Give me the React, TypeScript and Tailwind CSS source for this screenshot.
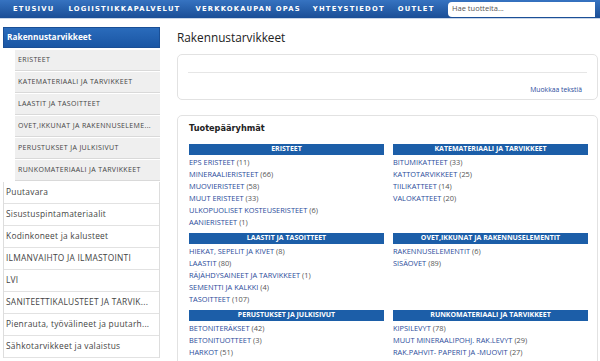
import React from "react";

const navItems = ["ETUSIVU", "LOGIISTIIKKAPALVELUT", "VERKKOKAUPAN OPAS", "YHTEYSTIEDOT", "OUTLET"];

const subItems = [
  "ERISTEET",
  "KATEMATERIAALI JA TARVIKKEET",
  "LAASTIT JA TASOITTEET",
  "OVET,IKKUNAT JA RAKENNUSELEME...",
  "PERUSTUKSET JA JULKISIVUT",
  "RUNKOMATERIAALI JA TARVIKKEET",
];

const mainItems = [
  "Puutavara",
  "Sisustuspintamateriaalit",
  "Kodinkoneet ja kalusteet",
  "ILMANVAIHTO JA ILMASTOINTI",
  "LVI",
  "SANITEETTIKALUSTEET JA TARVIK...",
  "Pienrauta, työvälineet ja puutarh...",
  "Sähkotarvikkeet ja valaistus",
];

type Group = { title: string; items: [string, number][] };

const groups: Group[] = [
  {
    title: "ERISTEET",
    items: [
      ["EPS ERISTEET", 11],
      ["MINERAALIERISTEET", 66],
      ["MUOVIERISTEET", 58],
      ["MUUT ERISTEET", 33],
      ["ULKOPUOLISET KOSTEUSERISTEET", 6],
      ["AANIERISTEET", 1],
    ],
  },
  {
    title: "KATEMATERIAALI JA TARVIKKEET",
    items: [
      ["BITUMIKATTEET", 33],
      ["KATTOTARVIKKEET", 25],
      ["TIILIKATTEET", 14],
      ["VALOKATTEET", 20],
    ],
  },
  {
    title: "LAASTIT JA TASOITTEET",
    items: [
      ["HIEKAT, SEPELIT JA KIVET", 8],
      ["LAASTIT", 80],
      ["RÄJÄHDYSAINEET JA TARVIKKEET", 1],
      ["SEMENTTI JA KALKKI", 4],
      ["TASOITTEET", 107],
    ],
  },
  {
    title: "OVET,IKKUNAT JA RAKENNUSELEMENTIT",
    items: [
      ["RAKENNUSELEMENTIT", 6],
      ["SISÄOVET", 89],
    ],
  },
  {
    title: "PERUSTUKSET JA JULKISIVUT",
    items: [
      ["BETONITERÄKSET", 42],
      ["BETONITUOTTEET", 3],
      ["HARKOT", 51],
    ],
  },
  {
    title: "RUNKOMATERIAALI JA TARVIKKEET",
    items: [
      ["KIPSILEVYT", 78],
      ["MUUT MINERAALIPOHJ. RAK.LEVYT", 29],
      ["RAK.PAHVIT- PAPERIT JA -MUOVIT", 27],
    ],
  },
];

const dejavu = { fontFamily: '"DejaVu Sans", Verdana, sans-serif' };

export default function App() {
  return (
    <div
      className="w-[600px] h-[361px] overflow-hidden bg-white text-[#333]"
      style={{ fontFamily: '"Open Sans", "DejaVu Sans", sans-serif' }}
    >
      {/* Top navigation */}
      <div className="h-[19px] flex items-center bg-gradient-to-b from-[#3673c1] to-[#1a4e96] border-b border-[#c9d6e8]">
        <div
          className="flex items-center pl-[13px] text-white font-bold text-[6.8px] tracking-[1.2px]"
          style={dejavu}
        >
          <span>{navItems[0]}</span>
          <span className="ml-[14px]">{navItems[1]}</span>
          <span className="ml-[15px]">{navItems[2]}</span>
          <span className="ml-[12px]">{navItems[3]}</span>
          <span className="ml-[13px]">{navItems[4]}</span>
        </div>
        <div className="ml-auto mr-[5px] w-[147px] h-[15px] bg-white rounded-l-[4px] flex items-center pl-[4px] text-[7.5px] text-[#555]">
          Hae tuotteita...
        </div>
      </div>

      <div className="flex">
        {/* Sidebar */}
        <div className="w-[160px] pl-[3px] pt-[8px] shrink-0">
          <div className="h-[21px] bg-gradient-to-b from-[#2a6bbb] to-[#1a56a4] flex items-center pl-[3px] text-white font-bold text-[8.3px] border border-[#1a4f96]">
            Rakennustarvikkeet
          </div>
          <div className="pl-[12px] pt-[1px]">
            {subItems.map((s) => (
              <div
                key={s}
                className="h-[22px] bg-[#efefef] border-b border-[#d9d9d9] border-t border-t-white flex items-center pl-[3px] text-[7px] tracking-[0.35px] text-[#444] whitespace-nowrap overflow-hidden"
              >
                {s}
              </div>
            ))}
          </div>
          <div className="border-l border-r border-[#dddddd] mt-[1px]">
            {mainItems.map((s) => (
              <div
                key={s}
                className="h-[22px] bg-white border-b border-[#e2e2e2] flex items-center pl-[2px] text-[8.4px] tracking-[0.25px] text-[#444] whitespace-nowrap overflow-hidden"
              >
                {s}
              </div>
            ))}
          </div>
        </div>

        {/* Main content */}
        <div className="flex-1 pl-[17px] pr-[2px]">
          <div className="h-[35px] flex items-center text-[11.8px] text-[#222] pt-[2px]">
            Rakennustarvikkeet
          </div>
          <div className="h-[46px] border border-[#e2e2e2] rounded-[5px] px-[10px] pt-[17px]">
            <div className="border-t border-[#e6e6e6]" />
            <div className="text-right text-[6.8px] text-[#2b4c9b] mt-[12px] pr-[5px]">Muokkaa tekstiä</div>
          </div>
          <div className="mt-[15px] border border-[#e2e2e2] rounded-[5px] pl-[11px] pr-[9px] pt-[6px] h-[260px]">
            <div className="text-[8.2px] font-bold text-[#222] h-[12px] flex items-center" style={dejavu}>
              Tuotepääryhmät
            </div>
            <div className="grid grid-cols-2 gap-x-[9px] mt-[10px]">
              {groups.map((g) => (
                <div key={g.title} className="mb-[4px]">
                  <div className="h-[11px] bg-[#1c5ea8] text-white font-bold text-[7px] flex items-center justify-center whitespace-nowrap">
                    {g.title}
                  </div>
                  <div className="pt-[2px]">
                    {g.items.map(([name, count]) => (
                      <div key={name} className="h-[12px] flex items-center text-[7.4px] whitespace-nowrap">
                        <span className="text-[#2b4c9b]">{name}</span>
                        <span className="text-[#555] ml-[2px]">({count})</span>
                      </div>
                    ))}
                  </div>
                </div>
              ))}
            </div>
          </div>
        </div>
      </div>
    </div>
  );
}
